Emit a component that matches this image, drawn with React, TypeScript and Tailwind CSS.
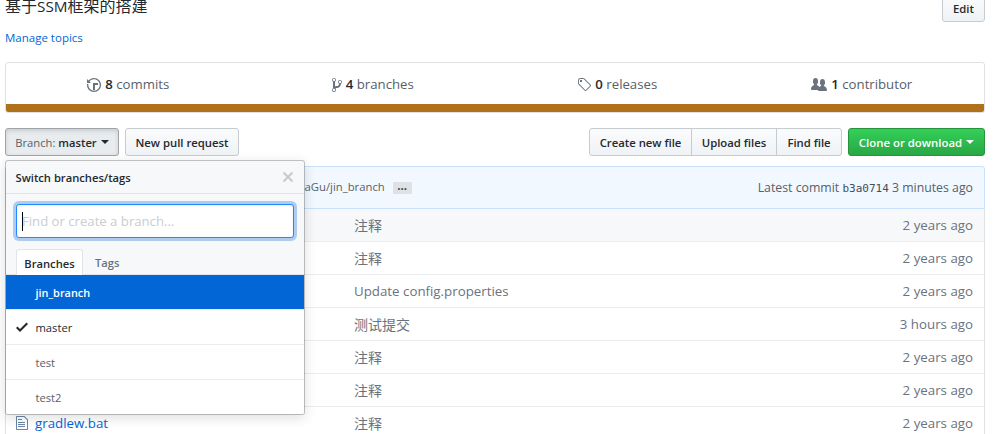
import React from "react";
import { clsx } from "clsx";

type IconProps = { d: string; w?: number; className?: string };

function Octicon({ d, w = 16, className }: IconProps) {
  return (
    <svg width={w} height={16} viewBox={`0 0 ${w} 16`} fill="currentColor" className={clsx("shrink-0", className)}>
      <path fillRule="evenodd" d={d} />
    </svg>
  );
}

const icons = {
  history:
    "M8 13H6V6h5v2H8v5zM7 1C4.81 1 2.87 2.02 1.59 3.59L0 2v4h4L2.5 4.5C3.55 3.17 5.17 2.3 7 2.3c3.14 0 5.7 2.56 5.7 5.7s-2.56 5.7-5.7 5.7A5.71 5.71 0 0 1 1.3 8c0-.34.03-.67.09-1H.08C.03 7.33 0 7.66 0 8c0 3.86 3.14 7 7 7s7-3.14 7-7-3.14-7-7-7z",
  branch:
    "M10 5c0-1.11-.89-2-2-2a1.993 1.993 0 0 0-1 3.72v.3c-.02.52-.23.98-.63 1.38-.4.4-.86.61-1.38.63-.83.02-1.48.16-2 .45V4.72a1.993 1.993 0 0 0-1-3.72C.88 1 0 1.89 0 3a2 2 0 0 0 1 1.72v6.56c-.59.35-1 .99-1 1.72 0 1.11.89 2 2 2 1.11 0 2-.89 2-2 0-.53-.2-1-.53-1.36.09-.06.48-.41.59-.47.25-.11.56-.17.94-.17 1.05-.05 1.95-.45 2.75-1.25S8.95 7.77 9 6.73h-.02C9.59 6.37 10 5.73 10 5zM2 1.8c.66 0 1.2.55 1.2 1.2 0 .65-.55 1.2-1.2 1.2C1.35 4.2.8 3.65.8 3c0-.65.55-1.2 1.2-1.2zm0 12.41c-.66 0-1.2-.55-1.2-1.2 0-.65.55-1.2 1.2-1.2.65 0 1.2.55 1.2 1.2 0 .65-.55 1.2-1.2 1.2zm6-8c-.66 0-1.2-.55-1.2-1.2 0-.65.55-1.2 1.2-1.2.65 0 1.2.55 1.2 1.2 0 .65-.55 1.2-1.2 1.2z",
  tag: "M7.73 1.73C7.26 1.26 6.62 1 5.96 1H3.5C2.13 1 1 2.13 1 3.5v2.47c0 .66.27 1.3.73 1.77l6.06 6.06c.39.39 1.02.39 1.41 0l4.59-4.59a.996.996 0 0 0 0-1.41L7.73 1.73zM2.38 7.09c-.31-.3-.47-.7-.47-1.13V3.5c0-.88.72-1.59 1.59-1.59h2.47c.42 0 .83.16 1.13.47l6.14 6.13-4.73 4.73-6.13-6.15zM3.01 3h2v2H3V3h.01z",
  people:
    "M16 12.999c0 .439-.45 1-1 1H7.995c-.539 0-.994-.447-.995-.999H1c-.54 0-1-.561-1-1 0-2.634 3-4 3-4s.229-.409 0-1c-.841-.621-1.058-.59-1-3 .058-2.419 1.367-3 2.5-3s2.442.58 2.5 3c.058 2.41-.159 2.379-1 3-.229.59 0 1 0 1s1.549.711 2.42 2.088C9.196 9.369 10 8.999 10 8.999s.229-.409 0-1c-.841-.62-1.058-.59-1-3 .058-2.419 1.367-3 2.5-3s2.437.581 2.495 3c.059 2.41-.158 2.38-1 3-.229.59 0 1 0 1s3.005 1.366 3.005 4z",
  close: "M7.48 8l3.75 3.75-1.48 1.48L6 9.48l-3.75 3.75-1.48-1.48L4.52 8 .77 4.25l1.48-1.48L6 6.52l3.75-3.75 1.48 1.48L7.48 8z",
  check: "M12 5l-8 8-4-4 1.5-1.5L4 10l6.5-6.5L12 5z",
  file: "M6 5H2V4h4v1zM2 8h7V7H2v1zm0 2h7V9H2v1zm0 2h7v-1H2v1zm10-7.5V14c0 .55-.45 1-1 1H1c-.55 0-1-.45-1-1V2c0-.55.45-1 1-1h7.5L12 4.5zM11 5L8 2H1v12h10V5z",
};

const stats = [
  { icon: icons.history, w: 14, count: 8, label: "commits" },
  { icon: icons.branch, w: 10, count: 4, label: "branches" },
  { icon: icons.tag, w: 14, count: 0, label: "releases" },
  { icon: icons.people, w: 16, count: 1, label: "contributor" },
];

const rows = [
  { message: "注释", age: "2 years ago" },
  { message: "注释", age: "2 years ago" },
  { message: "Update config.properties", age: "2 years ago", latin: true },
  { message: "测试提交", age: "3 hours ago" },
  { message: "注释", age: "2 years ago" },
  { message: "注释", age: "2 years ago" },
  { message: "注释", age: "2 years ago", file: "gradlew.bat" },
];

const branches = [
  { name: "jin_branch", state: "active" },
  { name: "master", state: "selected" },
  { name: "test", state: "" },
  { name: "test2", state: "" },
];

const btn =
  "flex h-7 items-center justify-center whitespace-nowrap border border-[#c6cbd0] bg-linear-to-b from-[#fafbfc] to-[#eff3f6] pt-[2px] text-[11.3px] font-semibold text-[#24292e]";

function Caret() {
  return <span className="-mt-[2px] ml-1 border-x-4 border-t-4 border-x-transparent border-t-current" />;
}

function BranchMenu() {
  return (
    <div className="absolute left-0 top-8 z-10 w-[300px] overflow-hidden rounded-[3px] border border-[#1b1f23]/25 bg-[#f6f8fa] bg-clip-padding shadow-[0_3px_12px_rgba(27,31,35,0.15)]">
      <div className="flex h-[33px] items-center justify-between border-b border-[#e1e4e8] pl-[9.5px] pr-[10px] text-[#c6cbd1]">
        <span className="pt-[2px] text-[11.2px] font-semibold text-[#24292e]">Switch branches/tags</span>
        <Octicon d={icons.close} w={12} />
      </div>
      <div className="px-2.5 pt-2.5">
        <div className="flex h-[34px] items-center rounded-[3px] border border-[#2188ff] bg-white pl-[5px] shadow-[inset_0_1px_2px_rgba(27,31,35,0.075),0_0_0_3px_rgba(3,102,214,0.3)]">
          <span className="h-[19px] w-px bg-black" />
          <span className="-ml-px pt-[2px] text-[13.15px] text-[#c9cdd1]">Find or create a branch...</span>
        </div>
      </div>
      <div className="mt-[11px] flex h-[26px] border-b border-[#e1e4e8] pl-2.5 text-[11.2px] font-semibold">
        <div className="-mb-px flex w-[67px] items-center justify-center rounded-t-[3px] border border-b-0 border-[#e1e4e8] bg-white pt-[3px] text-[#24292e]">Branches</div>
        <div className="flex items-center pl-3 pt-1 text-[#6a737d]">Tags</div>
      </div>
      {branches.map((b, i) => (
        <div
          key={b.name}
          className={clsx(
            "flex items-center pl-2.5",
            i === 3 ? "h-[34px]" : "h-[35px] border-b border-[#eaecef]",
            b.state === "active" && "bg-[#0366d6] text-[10.9px] font-semibold text-white",
            b.state === "selected" && "bg-white text-[11.2px] text-[#24292e]",
            b.state === "" && "bg-white text-[11.2px] text-[#586069]",
          )}
        >
          <span className="mr-[7.5px] flex w-3">{b.state === "selected" && <Octicon d={icons.check} w={12} />}</span>
          <span className="pt-[2px]">{b.name}</span>
        </div>
      ))}
    </div>
  );
}

export default function App() {
  return (
    <div className="h-[434px] w-[996px] overflow-hidden bg-white pl-[5px] pr-[11px] font-['Open_Sans','Noto_Sans_CJK_SC',sans-serif] text-[#24292e]">
      <div className="flex h-[22px] justify-between">
        <div className="h-4 whitespace-nowrap text-[16px] leading-[13px]">
          基于<span className="text-[15.3px]">SSM</span>框架的搭建
        </div>
        <div className={clsx(btn, "-mt-[6px] w-[43px] rounded-[3px]")}>Edit</div>
      </div>
      <div className="mt-[7px] h-[33px] text-[11.5px] leading-[18px] text-[#0366d6]">Manage topics</div>

      <div className="h-[51px] overflow-hidden rounded-[3px] border border-[#dfe2e5]">
        <div className="grid h-[41px] grid-cols-4">
          {stats.map((s) => (
            <div key={s.label} className="flex items-center justify-center pt-[2px] text-[13.2px] text-[#586069]">
              <Octicon d={s.icon} w={s.w} className="mr-1 text-[#6a737d]" />
              <span className="mr-[3.5px] font-semibold text-[#24292e]">{s.count}</span>
              {s.label}
            </div>
          ))}
        </div>
        <div className="h-2 bg-[#b07219]" />
      </div>

      <div className="relative mt-[15px] flex h-7">
        <div className="flex h-7 w-[114px] items-center justify-center rounded-[3px] border border-[#a0a4a8] bg-[#e9ecef] pt-[2px] text-[11.2px] font-semibold shadow-[inset_0_2px_4px_rgba(27,31,35,0.15)]">
          <span className="mr-[3px] font-normal text-[#586069]">Branch:</span>master
          <Caret />
        </div>
        <div className={clsx(btn, "ml-1.5 w-[114px] rounded-[3px]")}>New pull request</div>
        <div className="ml-auto flex">
          <div className={clsx(btn, "w-[103px] rounded-l-[3px]")}>Create new file</div>
          <div className={clsx(btn, "-ml-px w-[86px]")}>Upload files</div>
          <div className={clsx(btn, "-ml-px w-[66px] rounded-r-[3px]")}>Find file</div>
        </div>
        <div className="ml-1.5 flex h-7 w-[137px] items-center justify-center whitespace-nowrap rounded-[3px] border border-[#25943b] bg-linear-to-b from-[#34d058] to-[#28a745] pt-[2px] text-[11.4px] font-semibold text-white">
          Clone or download
          <Caret />
        </div>
        <BranchMenu />
      </div>

      <div className="mt-[10px]">
        <div className="flex h-[43px] items-center rounded-t-[3px] border border-[#c8e1ff] bg-[#f1f8ff] pl-[298.5px] pr-[11px] text-[#586069]">
          <span className="text-[11.3px]">aGu/jin_branch</span>
          <span className="ml-2 flex h-3 w-[19px] justify-center rounded-[1px] bg-[#dfe2e5] text-[11.5px] font-bold leading-[8px] text-[#444d56]">...</span>
          <span className="ml-auto pt-px text-[12.3px]">
            Latest commit <span className="font-['DejaVu_Sans_Mono',monospace] text-[11px] text-[#444d56]">b3a0714</span> 3 minutes ago
          </span>
        </div>
        <div className="border-x border-[#dfe2e5]">
          {rows.map((r, i) => (
            <div
              key={i}
              className={clsx(
                "flex items-center pr-[11px] text-[13.3px] text-[#6a737d]",
                i === 0 ? "h-8 bg-[#f6f8fa]" : "h-[33px] border-t border-[#eaecef]",
              )}
            >
              <div className="flex w-[348px] items-center pl-2.5">
                {r.file && (
                  <>
                    <Octicon d={icons.file} w={12} className="mr-[7px] text-[#6a86a8]" />
                    <span className="pt-[2px] text-[#0366d6]">{r.file}</span>
                  </>
                )}
              </div>
              <span className={r.latin ? "pt-[2px]" : "text-[14px]"}>{r.message}</span>
              <span className="ml-auto pt-[2px]">{r.age}</span>
            </div>
          ))}
        </div>
      </div>
    </div>
  );
}
